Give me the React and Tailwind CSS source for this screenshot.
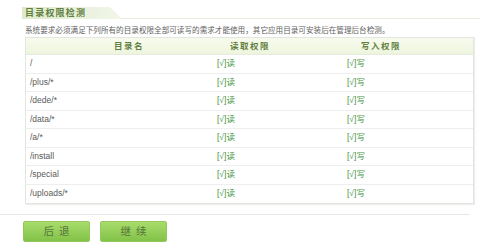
import React from "react";

const rows = ["/", "/plus/*", "/dede/*", "/data/*", "/a/*", "/install", "/special", "/uploads/*"];

const font = { fontFamily: '"Liberation Sans", "Noto Sans CJK SC", sans-serif' };

export default function App() {
  return (
    <div
      className="w-[499px] h-[252px] bg-white overflow-hidden relative"
      style={font}
    >
      {/* TITLE */}
      <div className="ml-[22px] mt-[7px] w-[458px] border-b border-[#e6ecdc] h-[12px] flex">
        <div className="w-[100px] h-[12px] bg-gradient-to-r from-[#dfeacb] via-[#e8f0da] to-[#f2f6ea] [clip-path:polygon(0_0,88%_0,100%_100%,0_100%)] pl-[3px] flex items-center">
          <span className="text-[9px] leading-none font-bold text-[#5f7f3f] tracking-[1.2px]">
            目录权限检测
          </span>
        </div>
      </div>

      {/* NOTE */}
      <div className="ml-[25px] mt-[7px] text-[7.6px] leading-[10px] text-[#5f5f5f] whitespace-nowrap">
        系统要求必须满足下列所有的目录权限全部可读写的需求才能使用，其它应用目录可安装后在管理后台检测。
      </div>

      {/* TABLE */}
      <div className="ml-[25px] mt-[1px] w-[449px] border border-[#e2e6dc] shadow-[1px_1px_1px_#eeeeee]">
        <div className="grid grid-cols-[184px_130px_1fr] h-[17px] items-center bg-gradient-to-b from-[#f7fbee] to-[#eef5de] border-b border-[#e6eadf] text-[8.5px] font-semibold text-[#62803f] tracking-[1.5px]">
          <div className="pl-[88px]">目录名</div>
          <div className="pl-[20px]">读取权限</div>
          <div className="pl-[21px]">写入权限</div>
        </div>
        {rows.map((r, i) => (
          <div
            key={r}
            className={`grid grid-cols-[184px_130px_1fr] h-[18.5px] items-center ${
              i < rows.length - 1 ? "border-b border-[#eeeeee]" : ""
            }`}
          >
            <div className="pl-[4px] text-[8.5px] text-[#5a5a5a]">{r}</div>
            <div className="pl-[7px] text-[8.5px] text-[#43933a]">[√]读</div>
            <div className="pl-[7px] text-[8.5px] text-[#43933a]">[√]写</div>
          </div>
        ))}
      </div>

      {/* DIVIDER */}
      <div className="mt-[10px] w-[470px] border-t border-[#e6e6e6]" />

      {/* BUTTONS */}
      <div className="ml-[23px] mt-[6px] flex gap-[10px]">
        <button className="w-[67px] h-[21px] rounded-[2px] border border-[#93c95c] bg-gradient-to-b from-[#a8dc6c] to-[#82c247] text-[10.5px] text-[#56763a] tracking-[5px] pl-[5px] flex items-center justify-center">
          后退
        </button>
        <button className="w-[67px] h-[21px] rounded-[2px] border border-[#93c95c] bg-gradient-to-b from-[#a8dc6c] to-[#82c247] text-[10.5px] text-[#56763a] tracking-[5px] pl-[5px] flex items-center justify-center">
          继续
        </button>
      </div>
    </div>
  );
}
